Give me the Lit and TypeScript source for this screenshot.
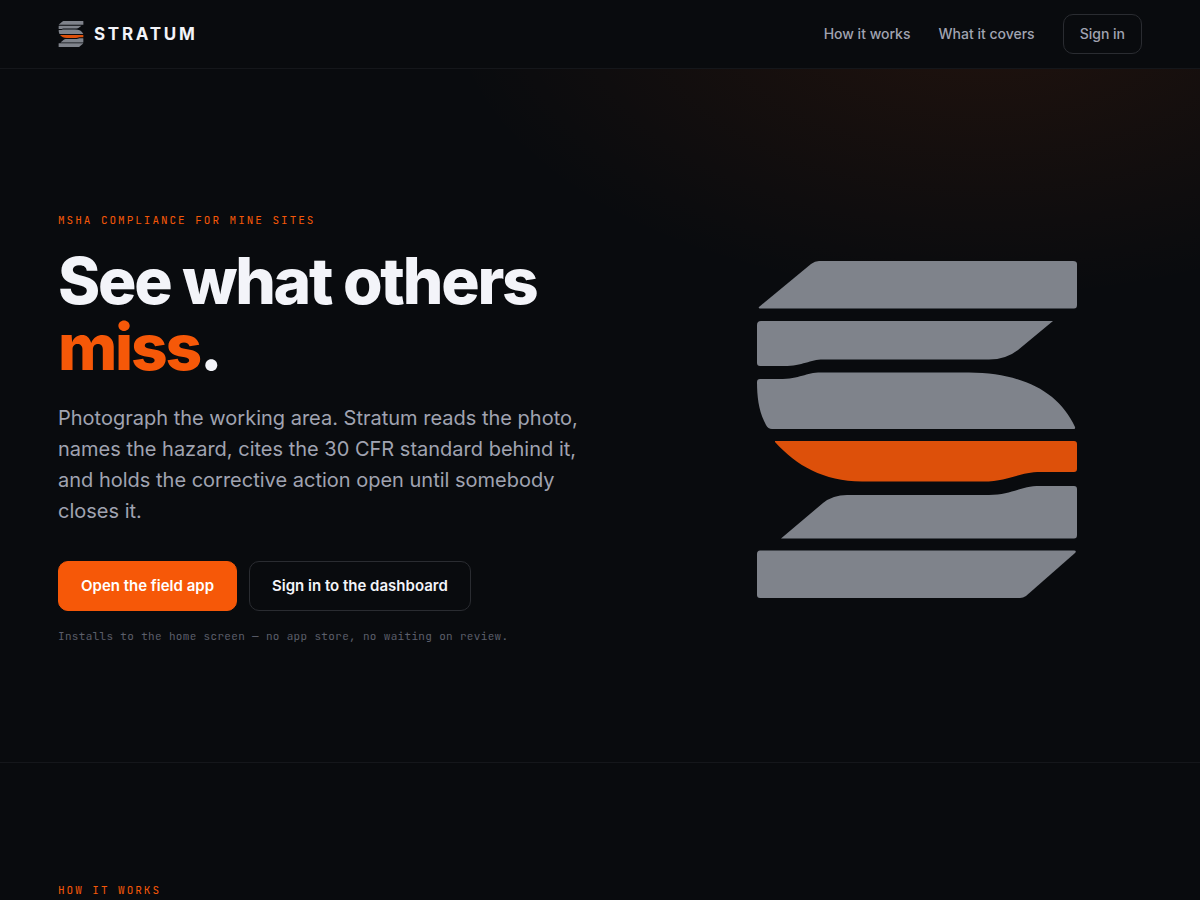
import { LitElement, html, css, svg } from "lit";
import { customElement } from "lit/decorators.js";

const slate = "#7f838b";
const ember = "#dd500a";

/* The six strata of the mark, top to bottom. */
const strata: Array<[string, string]> = [
  [slate, "M2 46Q1 47.500 3 47.500H317Q320 47.500 320 44V3Q320 0 316 0H62Q58 0 54 3Z"],
  [slate, "M4 60H296L261 89Q249 98.500 232 98.500H66C53 98.500 46 105 27 105H3Q0 105 0 102V64Q0 60 4 60Z"],
  [slate, "M3 118H22C44 118 48 111.500 64 111.500H212C266 112 302 131 318 166Q318.500 168 317 168H15Q11 168 9 164C2 151 0 137 0 121Q0 118 3 118Z"],
  [ember, "M18 180H317Q320 180 320 183V208Q320 211 317 211H284C261 211 253 220.500 226 220.500H105C66 220 40 205 18 181Z"],
  [slate, "M24 277.500L66 242Q76 234 90 234H232C255 234 263 225 283 225H317Q320 225 320 228V274Q320 277.500 317 277.500Z"],
  [slate, "M3 289.500H317Q320 289.500 318 292L269 335Q266 337 263 337H3Q0 337 0 334V293Q0 289.500 3 289.500Z"],
];

@customElement("stratum-mark")
export class StratumMark extends LitElement {
  static styles = css`
    :host { display: block; }
    .mark { display: block; width: 100%; height: 100%; }
  `;
  render() {
    return html`<svg class="mark" viewBox="0 0 320 337" aria-hidden="true">
      ${strata.map(([fill, d]) => svg`<path fill=${fill} d=${d}></path>`)}
    </svg>`;
  }
}

@customElement("app-root")
export class AppRoot extends LitElement {
  static styles = css`
    :host {
      display: block;
      min-height: 100vh;
      background: #090b0e;
      color: #f3f4f9;
      font-family: Inter, "Liberation Sans", sans-serif;
      font-size: 16px;
      line-height: 24px;
    }
    * { box-sizing: border-box; }
    a { color: inherit; text-decoration: none; }
    .wrap { max-width: 1140px; margin: 0 auto; padding: 0 28px; }
    .top { border-bottom: 1px solid #15171b; }
    .bar { display: flex; align-items: center; justify-content: space-between; padding-top: 14px; padding-bottom: 14px; }
    .brand { display: flex; align-items: center; gap: 10px; font-size: 17px; font-weight: 700; letter-spacing: 0.16em; }
    .brand stratum-mark { width: 26px; height: 26px; }
    .links { display: flex; align-items: center; gap: 28px; font-size: 14px; font-weight: 500; color: #a0a3b1; }
    .signin { padding: 7px 16px; border: 1px solid #2a2c31; border-radius: 10px; }
    .hero {
      border-bottom: 1px solid #15171b;
      background: radial-gradient(900px 500px at 82% -10%, rgba(249, 88, 10, 0.1), transparent 60%);
    }
    .grid {
      display: grid;
      grid-template-columns: 13fr 10fr;
      gap: 48px;
      align-items: center;
      padding-top: 142px;
      padding-bottom: 115px;
    }
    .eyebrow {
      margin: 0;
      font-family: "JetBrains Mono", "Liberation Mono", monospace;
      font-size: 11px;
      font-weight: 400;
      line-height: 18px;
      letter-spacing: 0.18em;
      text-transform: uppercase;
      color: #f65808;
    }
    .title { margin: 19px 0 0; font-size: 64px; line-height: 66px; font-weight: 800; letter-spacing: -0.035em; }
    .accent { color: #f65808; }
    .lede { max-width: 540px; margin: 23px 0 0; font-size: 20px; line-height: 31px; color: #a0a3b1; }
    .actions { display: flex; flex-wrap: wrap; gap: 12px; margin-top: 34px; }
    .button {
      padding: 12px 22px;
      border: 1px solid #2a2c31;
      border-radius: 10px;
      font-size: 15px;
      font-weight: 600;
    }
    .primary { background: #f65808; border-color: #f65808; color: #ffffff; }
    .note {
      margin: 14px 0 0;
      font-family: "JetBrains Mono", "Liberation Mono", monospace;
      font-size: 11px;
      line-height: 22px;
      letter-spacing: 0.03em;
      color: #5c5f6b;
    }
    .art { width: 320px; max-width: 100%; justify-self: center; }
    .how { padding-top: 118px; }
  `;

  render() {
    return html`
      <header class="top">
        <div class="wrap bar">
          <a class="brand" href="#"><stratum-mark></stratum-mark>STRATUM</a>
          <nav class="links">
            <a href="#how">How it works</a>
            <a href="#covers">What it covers</a>
            <a class="signin" href="#signin">Sign in</a>
          </nav>
        </div>
      </header>
      <main>
        <section class="hero">
          <div class="wrap grid">
            <div>
              <p class="eyebrow">MSHA compliance for mine sites</p>
              <h1 class="title">See what others <span class="accent">miss</span>.</h1>
              <p class="lede">
                Photograph the working area. Stratum reads the photo, names the hazard, cites the 30 CFR standard
                behind it, and holds the corrective action open until somebody closes it.
              </p>
              <div class="actions">
                <a class="button primary" href="#field">Open the field app</a>
                <a class="button" href="#dashboard">Sign in to the dashboard</a>
              </div>
              <p class="note">Installs to the home screen — no app store, no waiting on review.</p>
            </div>
            <stratum-mark class="art"></stratum-mark>
          </div>
        </section>
        <section class="how" id="how">
          <div class="wrap"><h2 class="eyebrow">How it works</h2></div>
        </section>
      </main>
    `;
  }
}
